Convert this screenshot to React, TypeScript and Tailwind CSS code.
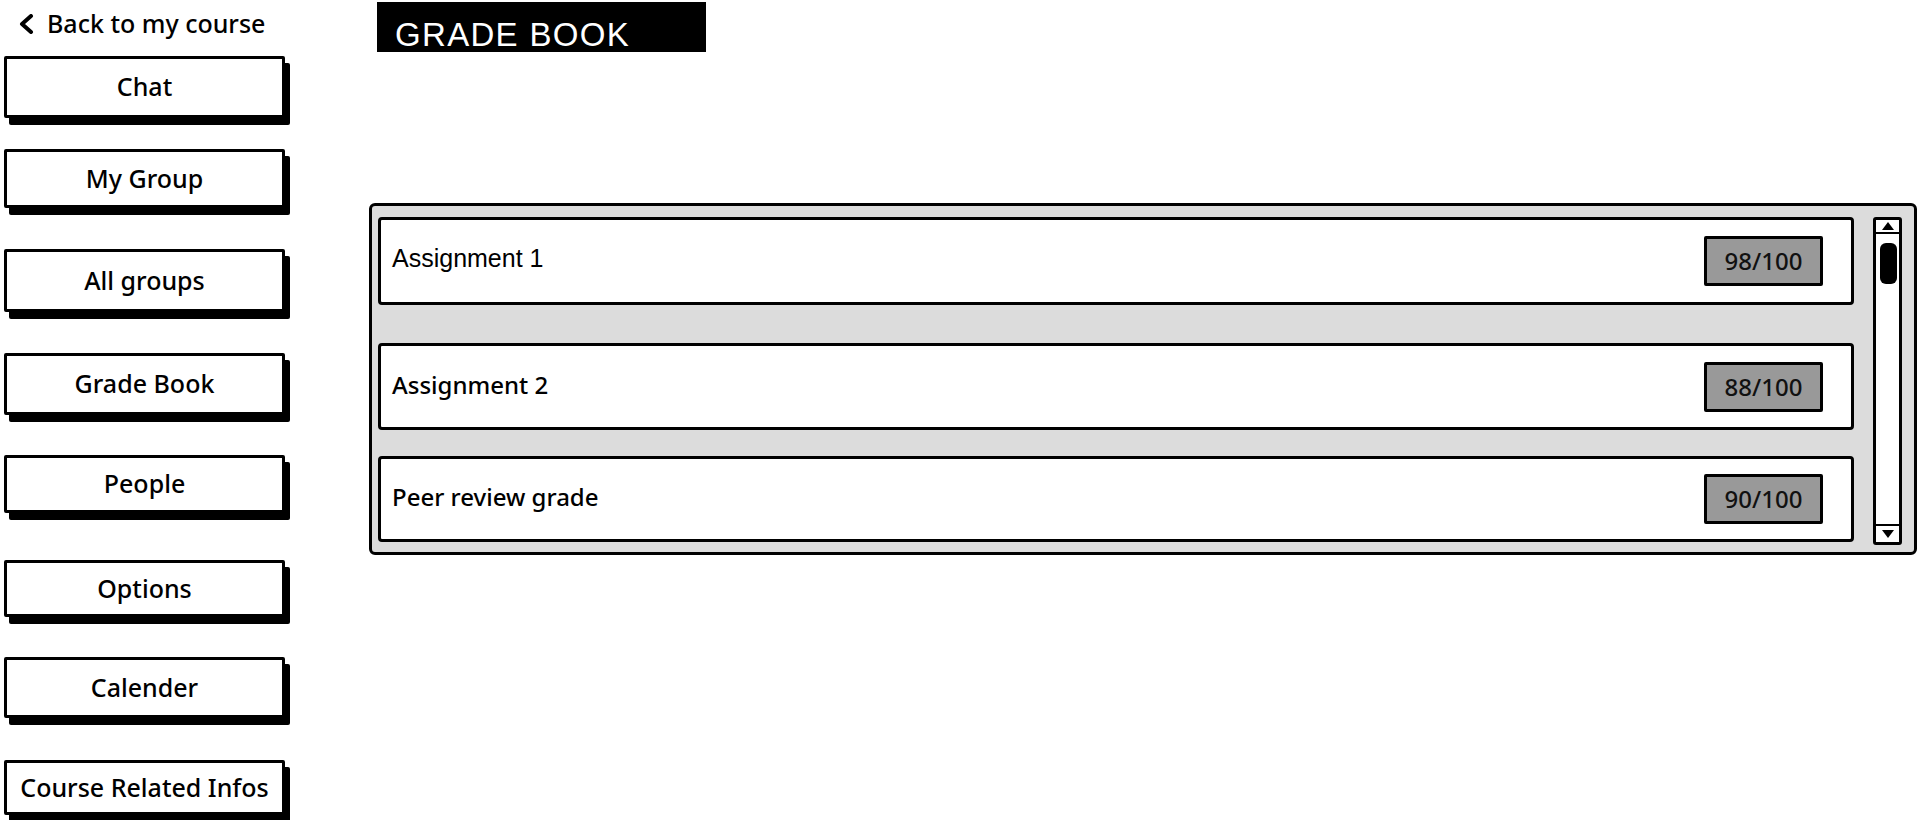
import { ReactNode } from "react";

const sketch = { fontFamily: "'Noto Sans', Lato, sans-serif", fontWeight: 500 };
const arial = { fontFamily: "'Liberation Sans', Arial, sans-serif" };

const navItems = [
  { label: "Chat", cls: "mt-[8px] h-[62px]" },
  { label: "My Group", cls: "mt-[31px] h-[59px]" },
  { label: "All groups", cls: "mt-[41px] h-[63px]" },
  { label: "Grade Book", cls: "mt-[41px] h-[62px]" },
  { label: "People", cls: "mt-[40px] h-[58px]" },
  { label: "Options", cls: "mt-[47px] h-[57px]" },
  { label: "Calender", cls: "mt-[40px] h-[61px]" },
  { label: "Course Related Infos", cls: "mt-[42px] h-[55px]" },
];

const grades = [
  { title: "Assignment 1", score: "98/100", cls: "h-[88px]", font: arial, size: "text-[25px]" },
  { title: "Assignment 2", score: "88/100", cls: "mt-[38px] h-[87px]", font: sketch, size: "text-[24px]" },
  { title: "Peer review grade", score: "90/100", cls: "mt-[26px] h-[86px]", font: sketch, size: "text-[24px]" },
];

function NavButton({ children, className }: { children: ReactNode; className: string }) {
  return (
    <button
      className={`${className} flex w-[281px] items-center justify-center rounded-[2px] border-[3px] border-black bg-white text-[25px] text-black shadow-[5px_7px_0_#000]`}
      style={sketch}
    >
      {children}
    </button>
  );
}

function Scrollbar() {
  return (
    <div className="flex h-[328px] w-[29px] flex-col rounded-[3px] border-[3px] border-black bg-white">
      <div className="flex h-[14px] items-center justify-center border-b-[2px] border-black">
        <svg width="12" height="8" viewBox="0 0 12 8">
          <polygon points="6,0 12,8 0,8" fill="#000" />
        </svg>
      </div>
      <div className="flex-1 px-[4px] pt-[9px]">
        <div className="h-[41px] w-[17px] rounded-[6px] bg-black" />
      </div>
      <div className="flex h-[18px] items-center justify-center border-t-[2px] border-black">
        <svg width="12" height="8" viewBox="0 0 12 8">
          <polygon points="0,0 12,0 6,8" fill="#000" />
        </svg>
      </div>
    </div>
  );
}

export default function App() {
  return (
    <div className="flex h-[820px] w-[1918px] overflow-hidden bg-white text-black">
      <aside className="flex w-[369px] shrink-0 flex-col pl-[4px]">
        <a href="#" className="flex h-[48px] items-center gap-[13px] pl-[14px] text-[25px] text-black" style={sketch}>
          <svg width="16" height="20" viewBox="0 0 16 20" fill="none">
            <polyline points="13,2 4,10 13,18" stroke="#000" strokeWidth="4" strokeLinecap="round" strokeLinejoin="round" />
          </svg>
          Back to my course
        </a>
        {navItems.map((item) => (
          <NavButton key={item.label} className={item.cls}>
            {item.label}
          </NavButton>
        ))}
      </aside>

      <main className="flex flex-col">
        <h1
          className="ml-[8px] mt-[2px] h-[50px] w-[329px] bg-black pl-[18px] pt-[16px] text-[33px] font-normal leading-none tracking-[0.04em] text-white"
          style={arial}
        >
          GRADE BOOK
        </h1>

        <section className="mt-[151px] flex h-[352px] w-[1548px] rounded-[6px] border-[3px] border-black bg-[#dcdcdc] pl-[6px] pr-[12px] pt-[11px]">
          <div className="flex w-[1476px] flex-col">
            {grades.map((g) => (
              <div
                key={g.title}
                className={`${g.cls} flex items-center justify-between rounded-[4px] border-[3px] border-black bg-white pl-[11px] pr-[28px]`}
              >
                <span className={`-mt-[4px] ${g.size}`} style={g.font}>
                  {g.title}
                </span>
                <span
                  className="flex h-[50px] w-[119px] items-center justify-center rounded-[2px] border-[3px] border-black bg-[#999999] text-[24px] text-[#111]"
                  style={sketch}
                >
                  {g.score}
                </span>
              </div>
            ))}
          </div>
          <div className="ml-[19px]">
            <Scrollbar />
          </div>
        </section>
      </main>
    </div>
  );
}
